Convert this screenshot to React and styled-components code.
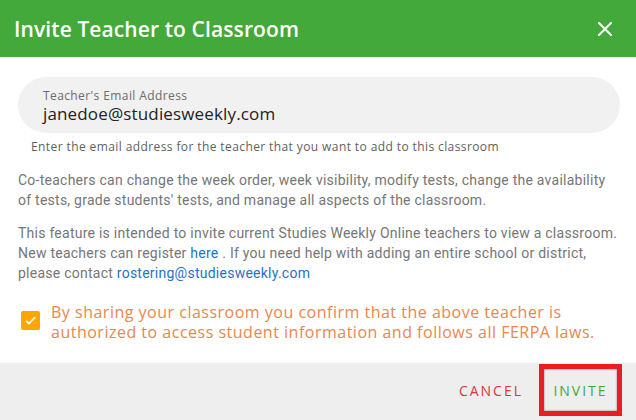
import React from "react";
import styled, { createGlobalStyle } from "styled-components";

const GlobalStyle = createGlobalStyle`
  html, body {
    margin: 0;
    padding: 0;
    background: #fff;
  }
  * { box-sizing: border-box; }
`;

const display = `"Open Sans", "Noto Sans", sans-serif`;

const Dialog = styled.div`
  width: 636px;
  height: 420px;
  display: flex;
  flex-direction: column;
  background: #fff;
  overflow: hidden;
`;

const Header = styled.div`
  height: 57px;
  flex: none;
  display: flex;
  align-items: center;
  justify-content: space-between;
  padding: 0 22px 0 14px;
  background: #43a93a;
`;

const Title = styled.h2`
  margin: 0;
  font-family: ${display};
  font-weight: 600;
  font-size: 21px;
  color: #fff;
  letter-spacing: 0.1px;
`;

const CloseButton = styled.button`
  border: 0;
  background: none;
  padding: 0;
  width: 18px;
  height: 18px;
  display: flex;
  align-items: center;
  justify-content: center;
  cursor: pointer;
`;

const Body = styled.div`
  flex: 1;
  padding: 20px 16px 0 18px;
`;

const Field = styled.div`
  height: 56px;
  border-radius: 28px;
  background: #f1f1f1;
  padding: 11px 25px 0;
  display: flex;
  flex-direction: column;
`;

const Label = styled.label`
  font-family: ${display};
  font-size: 12px;
  line-height: 15px;
  letter-spacing: 0.4px;
  color: #6b6b6b;
`;

const Value = styled.div`
  font-family: ${display};
  font-size: 17px;
  line-height: 22px;
  letter-spacing: 0.15px;
  color: #222;
`;

const Helper = styled.div`
  margin: 5px 0 0 13px;
  font-family: ${display};
  font-size: 12px;
  line-height: 18px;
  letter-spacing: 0.4px;
  color: #5f5f5f;
`;

const Paragraph = styled.p`
  margin: ${(p) => (p.$first ? "14px" : "13px")} 0 0;
  font-family: Roboto, "Liberation Sans", sans-serif;
  font-size: 14px;
  line-height: 20px;
  letter-spacing: 0.25px;
  color: #767676;
`;

const Link = styled.a`
  color: #1f73c6;
  text-decoration: none;
`;

const Consent = styled.label`
  margin-top: 19px;
  display: flex;
  align-items: flex-start;
  gap: 11px;
  padding-left: 3px;
`;

const Box = styled.span`
  flex: none;
  width: 19px;
  height: 19px;
  margin-top: 9px;
  border-radius: 2px;
  background: #ffa500;
  display: flex;
  align-items: center;
  justify-content: center;
`;

const ConsentText = styled.span`
  font-family: ${display};
  font-size: 16px;
  line-height: 20px;
  letter-spacing: 0.5px;
  color: #e8874e;
  max-width: 560px;
`;

const Footer = styled.div`
  height: 57px;
  flex: none;
  background: #eeeeee;
  display: flex;
  align-items: center;
  justify-content: flex-end;
  padding: 0 14px 3px 0;
`;

const TextButton = styled.button`
  border: 0;
  background: none;
  font-family: ${display};
  font-weight: 500;
  font-size: 14px;
  letter-spacing: 2px;
  color: ${(p) => p.$color};
  padding: 0 16px;
  height: 52px;
  cursor: pointer;
`;

const Highlight = styled.div`
  border: 5px solid #ec1c24;
  box-shadow: inset 0 0 2px rgba(0, 0, 0, 0.55);
  height: 52px;
  width: 83px;
  display: flex;
  align-items: center;
  justify-content: center;
`;

export default function App() {
  return (
    <>
      <GlobalStyle />
      <Dialog>
        <Header>
          <Title>Invite Teacher to Classroom</Title>
          <CloseButton aria-label="Close">
            <svg width="14" height="14" viewBox="0 0 14 14">
              <path d="M1 1 L13 13 M13 1 L1 13" stroke="#fff" strokeWidth="2" strokeLinecap="square" />
            </svg>
          </CloseButton>
        </Header>
        <Body>
          <Field>
            <Label>Teacher's Email Address</Label>
            <Value>janedoe@studiesweekly.com</Value>
          </Field>
          <Helper>Enter the email address for the teacher that you want to add to this classroom</Helper>
          <Paragraph $first>
            Co-teachers can change the week order, week visibility, modify tests, change the availability of tests,
            grade students' tests, and manage all aspects of the classroom.
          </Paragraph>
          <Paragraph>
            This feature is intended to invite current Studies Weekly Online teachers to view a classroom. New
            teachers can register <Link href="#">here</Link> . If you need help with adding an entire school or
            district, please contact <Link href="#">rostering@studiesweekly.com</Link>
          </Paragraph>
          <Consent>
            <Box>
              <svg width="13" height="13" viewBox="0 0 13 13">
                <path d="M2 6.8 L5 9.6 L11 3.4" fill="none" stroke="#fff" strokeWidth="1.8" />
              </svg>
            </Box>
            <ConsentText>
              By sharing your classroom you confirm that the above teacher is authorized to access student information
              and follows all FERPA laws.
            </ConsentText>
          </Consent>
        </Body>
        <Footer>
          <TextButton $color="#d8373d">CANCEL</TextButton>
          <Highlight>
            <TextButton $color="#45a83b">INVITE</TextButton>
          </Highlight>
        </Footer>
      </Dialog>
    </>
  );
}
